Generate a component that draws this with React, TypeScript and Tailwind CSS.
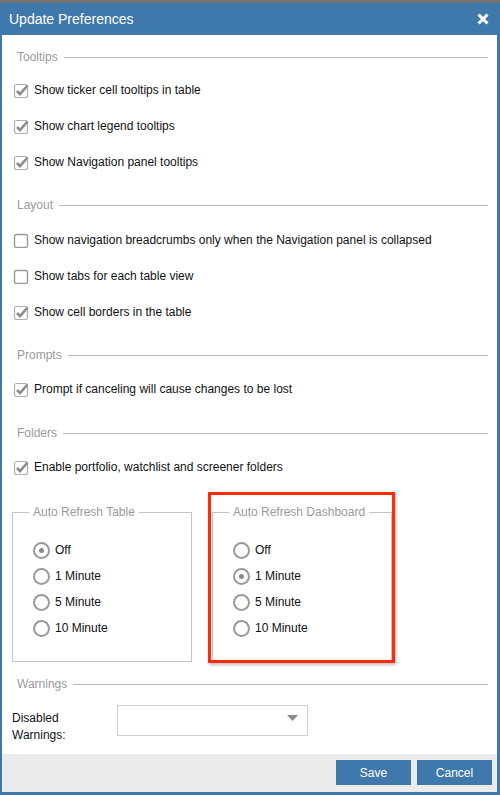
const font = { fontFamily: '"Liberation Sans", Arial, sans-serif' }

function SectionHeader({ title, className = '' }: { title: string; className?: string }) {
  return (
    <div className={`flex items-center h-[22px] pl-[5px] pr-[9px] ${className}`}>
      <span className="text-[12px] text-[#9a9a9a] pr-[6px]">{title}</span>
      <div className="flex-1 border-t border-[#b8b8b8]" />
    </div>
  )
}

function Check({ checked }: { checked: boolean }) {
  return (
    <svg width="16" height="16" viewBox="0 0 16 16" className="shrink-0">
      <rect x="1.5" y="2.5" width="13" height="13" rx="2" fill="white" stroke={checked ? '#b5aca8' : '#9a9a9a'} strokeWidth={checked ? 1.2 : 1.4} />
      {checked && <path d="M4 9 L7 12 L14.5 3.5" fill="none" stroke="#8c8c8c" strokeWidth="2.6" />}
    </svg>
  )
}

function CheckRow({ label, checked = true }: { label: string; checked?: boolean }) {
  return (
    <div className="flex items-center h-[36px] pl-[1px] gap-[5px]">
      <Check checked={checked} />
      <span className="text-[12px] text-[#111]">{label}</span>
    </div>
  )
}

function Radio({ label, selected = false }: { label: string; selected?: boolean }) {
  return (
    <div className="flex items-center h-[26px] gap-[5px]">
      <div className="w-[17px] h-[17px] rounded-full border-2 border-[#9a9a9a] flex items-center justify-center bg-white">
        {selected && <div className="w-[5px] h-[5px] rounded-full bg-[#8a8a8a]" />}
      </div>
      <span className="text-[12px] text-[#111]">{label}</span>
    </div>
  )
}

function Group({ title, selected }: { title: string; selected: number }) {
  const opts = ['Off', '1 Minute', '5 Minute', '10 Minute']
  return (
    <div className="relative w-[180px] h-[150px] border border-[#c4c4c4] pt-[24px] pl-[20px]">
      <span className="absolute left-[16px] top-[-9px] bg-white px-[4px] text-[12px] text-[#9a9a9a] leading-[16px]">{title}</span>
      {opts.map((o, i) => (
        <Radio key={o} label={o} selected={i === selected} />
      ))}
    </div>
  )
}

export default function App() {
  return (
    <div className="w-[500px] h-[795px] flex flex-col bg-[#737373]" style={font}>
      <div className="h-[3px]" />
      <div className="flex-1 flex flex-col border-l-2 border-r-[3px] border-b-[3px] border-[#3f78ab] bg-white">
        {/* Title bar */}
        <div className="h-[32px] bg-[#3f78ab] flex items-center justify-between pl-[7px] pr-[8px]">
          <span className="text-white text-[14px]">Update Preferences</span>
          <svg width="12" height="12" viewBox="0 0 12 12">
            <path d="M1.5 1.5 L10.5 10.5 M10.5 1.5 L1.5 10.5" stroke="white" strokeWidth="3" />
          </svg>
        </div>

        {/* Body */}
        <div className="flex-1 pl-[10px] pt-[11px]">
          <SectionHeader title="Tooltips" />
          <div className="mt-[4px]">
            <CheckRow label="Show ticker cell tooltips in table" />
            <CheckRow label="Show chart legend tooltips" />
            <CheckRow label="Show Navigation panel tooltips" />
          </div>

          <SectionHeader title="Layout" className="mt-[14px]" />
          <div className="mt-[6px]">
            <CheckRow label="Show navigation breadcrumbs only when the Navigation panel is collapsed" checked={false} />
            <CheckRow label="Show tabs for each table view" checked={false} />
            <CheckRow label="Show cell borders in the table" />
          </div>

          <SectionHeader title="Prompts" className="mt-[14px]" />
          <div className="mt-[5px]">
            <CheckRow label="Prompt if canceling will cause changes to be lost" />
          </div>

          <SectionHeader title="Folders" className="mt-[15px]" />
          <div className="mt-[5px]">
            <CheckRow label="Enable portfolio, watchlist and screener folders" />
          </div>

          <div className="flex gap-[20px] mt-[27px]">
            <Group title="Auto Refresh Table" selected={0} />
            <div className="relative">
              <Group title="Auto Refresh Dashboard" selected={1} />
              <div className="absolute left-[-4px] top-[-20px] w-[187px] h-[171px] border-[3px] border-[#ff2a0a] shadow-[1px_2px_3px_rgba(0,0,0,0.25)] pointer-events-none" />
            </div>
          </div>

          <SectionHeader title="Warnings" className="mt-[11px]" />
          <div className="flex mt-[10px]">
            <div className="w-[105px] pt-[5px] text-[12px] leading-[17px] text-[#111]">
              Disabled
              <br />
              Warnings:
            </div>
            <div className="w-[191px] h-[31px] border border-[#cfcfcf] flex items-center justify-end pr-[9px] pb-[6px]">
              <svg width="11" height="6" viewBox="0 0 11 6">
                <path d="M0 0 L11 0 L5.5 6 Z" fill="#8a8a8a" />
              </svg>
            </div>
          </div>
        </div>

        {/* Footer */}
        <div className="h-[38px] bg-[#ebebeb] flex justify-end items-start pt-[6px] pr-[5px] gap-[6px]">
          <button className="w-[75px] h-[25px] bg-[#3f78ab] text-white text-[12px]">Save</button>
          <button className="w-[75px] h-[25px] bg-[#3f78ab] text-white text-[12px]">Cancel</button>
        </div>
      </div>
    </div>
  )
}
